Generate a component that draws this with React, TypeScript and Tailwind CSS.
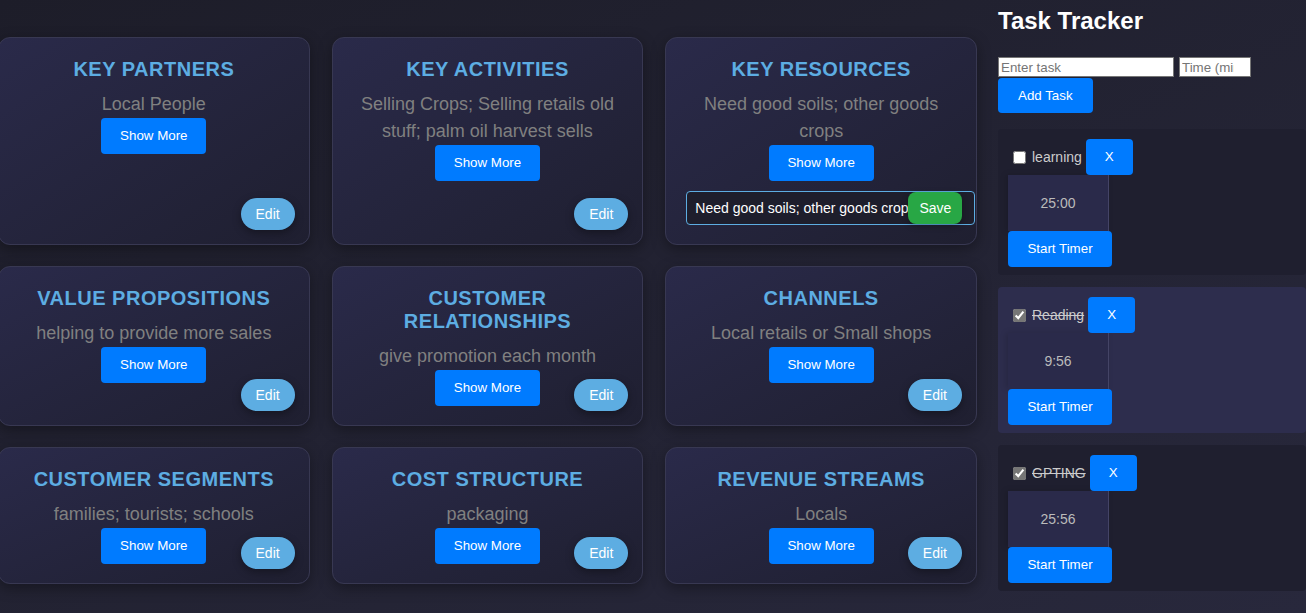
import { useState } from "react"

type Block = { title: string; text: string; editing?: boolean }

const blocks: Block[] = [
  { title: "Key Partners", text: "Local People" },
  { title: "Key Activities", text: "Selling Crops; Selling retails old stuff; palm oil harvest sells" },
  { title: "Key Resources", text: "Need good soils; other goods crops", editing: true },
  { title: "Value Propositions", text: "helping to provide more sales" },
  { title: "Customer Relationships", text: "give promotion each month" },
  { title: "Channels", text: "Local retails or Small shops" },
  { title: "Customer Segments", text: "families; tourists; schools" },
  { title: "Cost Structure", text: "packaging" },
  { title: "Revenue Streams", text: "Locals" },
]

type Task = { name: string; done: boolean; time: string; light?: boolean }

const tasks: Task[] = [
  { name: "learning", done: false, time: "25:00" },
  { name: "Reading", done: true, time: "9:56", light: true },
  { name: "GPTING", done: true, time: "25:56" },
]

function CanvasCard({ block }: { block: Block }) {
  const [draft, setDraft] = useState(block.text)

  return (
    <div className="relative flex flex-col items-center rounded-[12px] border border-[#383852] bg-linear-to-br from-[#2a2a4a] to-[#1f1f30] px-[20px] pt-[20px] pb-[19px] text-center shadow-[0_4px_14px_rgba(0,0,0,0.35)]">
      <h3 className="mb-[10px] text-[20px] leading-[23px] font-bold uppercase tracking-[0.5px] text-[#5dade2]">
        {block.title}
      </h3>
      <p className="text-[18px] leading-[27px] text-[#808080]">{block.text}</p>
      <button className="h-[36px] w-[105px] rounded-[4px] bg-[#007bff] text-[13.33px] text-white">
        Show More
      </button>

      {block.editing ? (
        <div className="relative mt-[10px] w-[289px] self-start">
          <input
            value={draft}
            onChange={(e) => setDraft(e.target.value)}
            className="block h-[34px] w-full rounded-[4px] border border-[#5dade2] bg-[#1e1e2c] pl-[8px] pr-[60px] text-[14px] text-white outline-none"
          />
          <button className="absolute top-[1px] right-[13px] h-[32px] rounded-[8px] bg-[#28a745] px-[11px] text-[14px] text-white shadow-[0_2px_6px_rgba(0,0,0,0.3)]">
            Save
          </button>
        </div>
      ) : (
        <button className="absolute right-[14px] bottom-[14px] h-[32px] rounded-full bg-[#5dade2] px-[15px] text-[14px] text-white shadow-[0_3px_8px_rgba(0,0,0,0.35)]">
          Edit
        </button>
      )}
    </div>
  )
}

function TaskCard({ task }: { task: Task }) {
  return (
    <div
      className={`mb-[12px] rounded-[4px] px-[10px] pt-[10px] pb-[8px] ${
        task.light ? "bg-[#2d2d4d]" : "bg-[#1f1f2f]"
      }`}
    >
      <div className="flex items-center">
        <input
          type="checkbox"
          defaultChecked={task.done}
          className="ml-[5px] mr-[3px] h-[13px] w-[13px] accent-[#767676]"
        />
        <span
          className={`ml-[3px] text-[14px] text-[#cccccc] ${task.done ? "line-through" : ""}`}
        >
          {task.name}
        </span>
        <button className="ml-[4px] h-[36px] rounded-[4px] bg-[#007bff] px-[19px] text-[13.33px] text-white">
          X
        </button>
      </div>
      <div className="flex h-[56px] w-[101px] items-center justify-center border-r border-[#444466] bg-[#2a2a4a] text-[14px] text-[#bbbbbb] shadow-[-2px_0_6px_rgba(0,0,0,0.15)]">
        {task.time}
      </div>
      <button className="h-[36px] w-[104px] rounded-[4px] bg-[#007bff] text-[13.33px] text-white">
        Start Timer
      </button>
    </div>
  )
}

function App() {
  return (
    <div className="h-screen w-screen overflow-hidden bg-linear-to-br from-[#1d1d29] to-[#28283c] font-['Liberation_Sans',Arial,sans-serif]">
      <div className="flex items-start">
        <main className="-ml-[2px] grid w-[979px] shrink-0 grid-cols-3 gap-x-[22px] gap-y-[21px] pt-[37px]">
          {blocks.map((b) => (
            <CanvasCard key={b.title} block={b} />
          ))}
        </main>

        <aside className="ml-[21px] min-w-0 flex-1 pt-[7px]">
          <h2 className="mb-[22px] text-[24px] leading-[28px] font-bold text-white">Task Tracker</h2>
          <div className="flex gap-[5px]">
            <input
              placeholder="Enter task"
              className="h-[20px] w-[176px] border border-[#767676] bg-white px-[2px] text-[13.33px] text-black placeholder:text-[#757575]"
            />
            <input
              placeholder="Time (minutes)"
              className="h-[20px] w-[72px] border border-[#767676] bg-white pl-[2px] pr-[16px] text-[13.33px] text-black placeholder:text-[#757575]"
            />
          </div>
          <button className="mt-[1px] mb-[16px] h-[35px] rounded-[4px] bg-[#007bff] px-[20px] text-[13.33px] text-white">
            Add Task
          </button>

          {tasks.map((t) => (
            <TaskCard key={t.name} task={t} />
          ))}
        </aside>
      </div>
    </div>
  )
}

export default App
